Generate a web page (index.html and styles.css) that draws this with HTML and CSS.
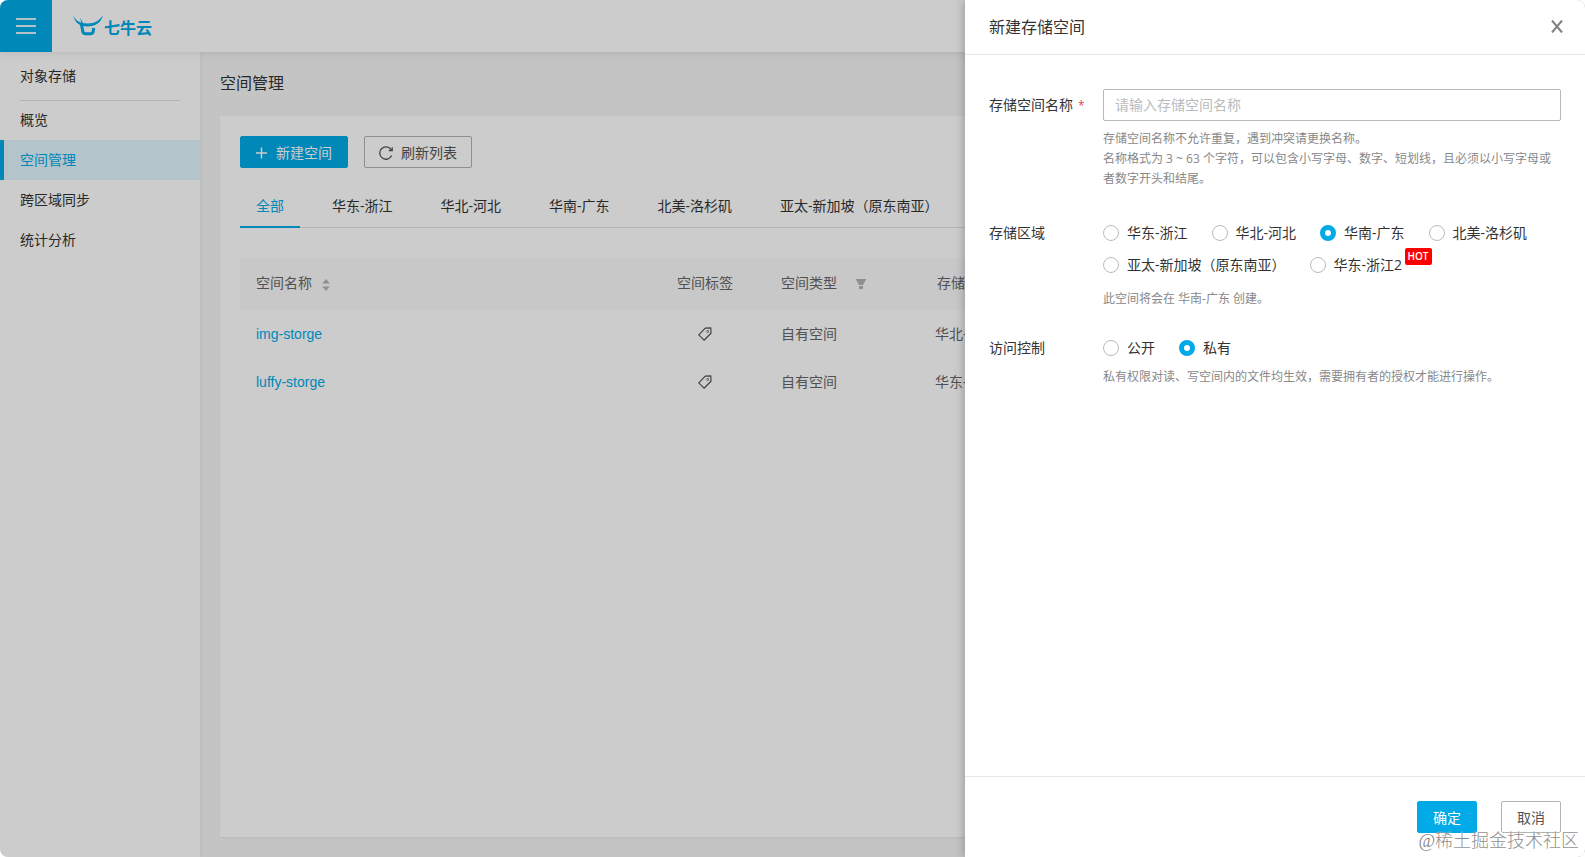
FILE: index.html
```html
<!DOCTYPE html>
<html lang="zh-CN">

<head>
    <meta charset="UTF-8">
    <meta name="viewport" content="width=device-width, initial-scale=1.0">
    <title>空间管理</title>
    <link rel="stylesheet" href="styles.css">
</head>

<body>
<div class="app">
    <!-- 顶部导航 -->
    <header class="topbar">
        <div class="menu-btn">
            <span></span>
            <span></span>
            <span></span>
        </div>
        <div class="logo">
            <svg width="32" height="22" viewBox="0 0 32 22">
                <path d="M1 0C3 5 8 8.500 15.500 8.500C23 8.500 28 5 31 0C29 8 23 11.500 15.500 11.500C8 11.500 3 8 1 0Z" fill="#00aae7"/>
                <path d="M8 2.500L11 8L10 10Z" fill="#00aae7"/>
                <path d="M9.300 8.500L10.800 16.500Q11.200 18.700 13.500 18.700H18.500Q20.800 18.700 21.200 16.500L21.800 13" fill="none" stroke="#00aae7" stroke-width="3"/>
            </svg>
            <span class="logo-text">七牛云</span>
        </div>
    </header>

    <div class="layout">
        <!-- 侧边菜单 -->
        <nav class="sidebar">
            <div class="side-title">对象存储</div>
            <a class="side-item">概览</a>
            <a class="side-item active">空间管理</a>
            <a class="side-item">跨区域同步</a>
            <a class="side-item">统计分析</a>
        </nav>

        <main class="main">
            <h1 class="page-title">空间管理</h1>
            <section class="card">
                <div class="toolbar">
                    <button class="btn btn-primary btn-tool">
                        <svg width="12" height="12" viewBox="0 0 12 12"><path d="M5.500 .5V11.500M0 6H11" stroke="#fff" stroke-width="1.500"/></svg>
                        新建空间
                    </button>
                    <button class="btn btn-tool">
                        <svg width="14" height="14" viewBox="0 0 14 14"><path d="M12.200 3.700A6.200 6.200 0 1 0 12.600 9.600M13.200 1.200V4.500H9.900" fill="none" stroke="#555" stroke-width="1.300"/></svg>
                        刷新列表
                    </button>
                </div>

                <div class="tabs">
                    <div class="tab active">全部</div>
                    <div class="tab">华东-浙江</div>
                    <div class="tab">华北-河北</div>
                    <div class="tab">华南-广东</div>
                    <div class="tab">北美-洛杉矶</div>
                    <div class="tab">亚太-新加坡（原东南亚）</div>
                </div>

                <!-- 空间列表 -->
                <div class="table">
                    <div class="row row-head">
                        <div class="cell">空间名称
                            <svg class="sort" width="8" height="14" viewBox="0 0 8 14"><path d="M4 1L7.700 5.500H.3ZM4 13L7.700 8.500H.3Z" fill="#b4b4b4"/></svg>
                        </div>
                        <div class="cell">空间标签</div>
                        <div class="cell">空间类型
                            <svg class="filter" width="12" height="12" viewBox="0 0 12 12"><path d="M.7 1H11.300L8 7H4ZM4 8H8V11H4Z" fill="#b4b4b4"/></svg>
                        </div>
                        <div class="cell region-head">存储区域</div>
                    </div>
                    <div class="row">
                        <div class="cell"><a class="link">img-storge</a></div>
                        <div class="cell tag">
                            <svg width="14" height="14" viewBox="0 0 14 14"><path d="M.8 7.800L7.300 1.200L12.800.8L13 6.300L6 13.200Z" fill="none" stroke="#555" stroke-width="1.200" stroke-linejoin="round"/><circle cx="9.700" cy="4.500" r="1" fill="none" stroke="#555" stroke-width=".8"/></svg>
                        </div>
                        <div class="cell">自有空间</div>
                        <div class="cell">华北-河北</div>
                    </div>
                    <div class="row">
                        <div class="cell"><a class="link">luffy-storge</a></div>
                        <div class="cell tag">
                            <svg width="14" height="14" viewBox="0 0 14 14"><path d="M.8 7.800L7.300 1.200L12.800.8L13 6.300L6 13.200Z" fill="none" stroke="#555" stroke-width="1.200" stroke-linejoin="round"/><circle cx="9.700" cy="4.500" r="1" fill="none" stroke="#555" stroke-width=".8"/></svg>
                        </div>
                        <div class="cell">自有空间</div>
                        <div class="cell">华东-浙江</div>
                    </div>
                </div>
            </section>
        </main>
    </div>

    <div class="mask"></div>

    <!-- 新建空间抽屉 -->
    <aside class="drawer">
        <div class="drawer-head">
            <span>新建存储空间</span>
            <svg width="12" height="13" viewBox="0 0 12 13"><path d="M1 .5L11 12.500M11 .5L1 12.500" stroke="#808080" stroke-width="2"/></svg>
        </div>

        <div class="drawer-body">
            <div class="form-item item-name">
                <div class="label">存储空间名称<span class="required">*</span></div>
                <div class="field">
                    <input class="input" type="text" placeholder="请输入存储空间名称">
                    <p class="hint">存储空间名称不允许重复，遇到冲突请更换名称。<br>名称格式为 3 ~ 63 个字符，可以包含小写字母、数字、短划线，且必须以小写字母或者数字开头和结尾。</p>
                </div>
            </div>

            <div class="form-item item-region">
                <div class="label">存储区域</div>
                <div class="field">
                    <div class="radios">
                        <label class="radio"><i></i>华东-浙江</label>
                        <label class="radio"><i></i>华北-河北</label>
                        <label class="radio checked"><i></i>华南-广东</label>
                        <label class="radio"><i></i>北美-洛杉矶</label>
                        <label class="radio"><i></i>亚太-新加坡（原东南亚）</label>
                        <label class="radio"><i></i>华东-浙江2<b class="hot">HOT</b></label>
                    </div>
                    <p class="hint">此空间将会在 华南-广东 创建。</p>
                </div>
            </div>

            <div class="form-item">
                <div class="label">访问控制</div>
                <div class="field">
                    <div class="radios">
                        <label class="radio"><i></i>公开</label>
                        <label class="radio checked"><i></i>私有</label>
                    </div>
                    <p class="hint">私有权限对读、写空间内的文件均生效，需要拥有者的授权才能进行操作。</p>
                </div>
            </div>
        </div>

        <div class="drawer-foot">
            <button class="btn btn-primary">确定</button>
            <button class="btn">取消</button>
        </div>
    </aside>

    <div class="watermark">@稀土掘金技术社区</div>
</div>
</body>
</html>
```

FILE: styles.css
```css
/* 公共样式 */
* {
    box-sizing: border-box;
}

body {
    margin: 0;
    background: #fff;
    font-family: "Open Sans", "Noto Sans CJK SC", sans-serif;
    font-size: 14px;
    line-height: 20px;
    color: #333;
}

.app {
    position: relative;
    display: flex;
    flex-direction: column;
    height: 100vh;
    overflow: hidden;
    border-radius: 8px;
    background: #f5f5f5;
}

svg {
    display: block;
    flex: none;
}

.btn {
    display: flex;
    align-items: center;
    justify-content: center;
    width: 60px;
    height: 32px;
    padding: 2px 0 0;
    border: 1px solid #b3b3b3;
    border-radius: 2px;
    background: #fff;
    color: #555;
    font: inherit;
}

.btn-primary {
    border-color: #00aae7;
    background: #00aae7;
    color: #fff;
}

/* 顶部导航 */
.topbar {
    display: flex;
    flex: none;
    height: 52px;
    background: #fff;
    box-shadow: 0 2px 8px rgba(0,0,0,0.08);
    z-index: 1;
}

.menu-btn {
    display: flex;
    flex-direction: column;
    align-items: center;
    justify-content: center;
    gap: 5px;
    width: 52px;
    background: #00aae7;
}

.menu-btn span {
    width: 20px;
    height: 2px;
    background: #e2f3fb;
}

.logo {
    display: flex;
    align-items: center;
    padding-left: 20px;
}

.logo-text {
    color: #00aae7;
    font-size: 16px;
    font-weight: 700;
    padding-top: 3px;
}

/* 侧边菜单 */
.layout {
    display: flex;
    flex: 1;
    min-height: 0;
}

.sidebar {
    width: 200px;
    flex: none;
    background: #fff;
    box-shadow: 1px 0 4px rgba(0,0,0,0.04);
}

.side-title {
    height: 49px;
    margin: 0 20px;
    line-height: 48px;
    border-bottom: 1px solid #e3e3e3;
}

.side-item {
    display: block;
    height: 40px;
    line-height: 40px;
    padding-left: 20px;
}

.side-title + .side-item {
    margin-top: -1px;
}

.side-item.active {
    border-left: 4px solid #00aae7;
    padding-left: 16px;
    background: #e0f5fd;
    color: #00aae7;
}

/* 主内容 */
.main {
    display: flex;
    flex-direction: column;
    flex: 1;
    padding: 0 20px 20px;
}

.page-title {
    margin: 0;
    height: 64px;
    line-height: 62px;
    font-size: 16px;
    font-weight: 400;
}

.card {
    flex: 1;
    padding: 20px;
    background: #fff;
    box-shadow: 0 1px 2px rgba(0,0,0,0.05);
}

.toolbar {
    display: flex;
    gap: 16px;
}

.btn-tool {
    width: 108px;
    gap: 8px;
}

.tabs {
    display: flex;
    gap: 16px;
    height: 44px;
    margin-top: 16px;
    box-shadow: inset 0 -1px #e0e0e0;
}

.tab {
    padding: 0 16px;
    line-height: 44px;
}

.tab.active {
    border-bottom: 2px solid #00aae7;
    color: #00aae7;
}

/* 空间列表 */
.table {
    margin-top: 30px;
}

.row {
    display: grid;
    grid-template-columns: 421px 104px 154px 1fr;
    align-items: center;
    height: 48px;
    padding: 0 16px;
    color: #666;
}

.row-head {
    height: 52px;
    padding-bottom: 2px;
    background: #fafafa;
}

.cell {
    display: flex;
    align-items: center;
}

.tag {
    padding-left: 21px;
}

.region-head {
    padding-left: 2px;
}

.sort {
    margin: 4px 0 0 10px;
}

.filter {
    margin: 2px 0 0 18px;
}

.link {
    font-family: "Liberation Sans", sans-serif;
    color: #00aae7;
}

/* 遮罩和抽屉 */
.mask {
    position: absolute;
    inset: 0;
    background: rgba(0,0,0,0.2);
    z-index: 2;
}

.drawer {
    position: absolute;
    top: 0;
    right: 0;
    bottom: 0;
    display: flex;
    flex-direction: column;
    width: 620px;
    background: #fff;
    box-shadow: 0 0 10px rgba(0,0,0,0.3);
    z-index: 3;
}

.drawer-head {
    display: flex;
    align-items: center;
    justify-content: space-between;
    height: 55px;
    padding: 0 22px 1px 24px;
    border-bottom: 1px solid #e5e5e5;
    font-size: 16px;
}

.drawer-body {
    flex: 1;
    padding: 34px 24px 0;
}

.form-item {
    display: flex;
}

.item-name {
    margin-bottom: 28px;
}

.item-region {
    margin-bottom: 23px;
}

.label {
    width: 114px;
    flex: none;
    line-height: 32px;
}

.required {
    margin-left: 5px;
    font-size: 12px;
    color: #e8475b;
}

.field {
    flex: 1;
}

.input {
    display: block;
    width: 100%;
    height: 32px;
    padding: 0 11px 2px;
    border: 1px solid #b8b8b8;
    border-radius: 2px;
    font: inherit;
}

.input::placeholder {
    color: #bbb;
}

.hint {
    margin: 0;
    font-size: 12px;
    color: #888;
}

.item-name .hint {
    margin-top: 8px;
}

.item-region .hint {
    margin-top: 8px;
}

.form-item:last-child .hint {
    margin-top: 3px;
}

.radios {
    display: flex;
    flex-wrap: wrap;
    column-gap: 24px;
}

.radio {
    position: relative;
    display: flex;
    align-items: center;
    gap: 8px;
    height: 32px;
}

.radio i {
    width: 16px;
    height: 16px;
    border: 1px solid #bbb;
    border-radius: 50%;
}

.radio.checked i {
    border: 5px solid #00aae7;
}

.hot {
    position: absolute;
    left: 95px;
    top: -1px;
    width: 27px;
    height: 17px;
    border-radius: 2px;
    background: #f00;
    color: #fff;
    font-size: 10px;
    font-weight: 600;
    line-height: 16px;
    text-align: center;
}

.drawer-foot {
    display: flex;
    justify-content: flex-end;
    gap: 24px;
    height: 81px;
    padding: 24px 24px 0;
    border-top: 1px solid #e8e8e8;
}

/* 水印 */
.watermark {
    position: absolute;
    right: 6px;
    bottom: 4px;
    font-family: "Liberation Serif", "Noto Sans CJK SC", serif;
    font-size: 18px;
    font-weight: 300;
    line-height: 24px;
    color: rgba(110,110,110,0.8);
    text-shadow: 0 0 1px #fff;
    z-index: 4;
}
```
